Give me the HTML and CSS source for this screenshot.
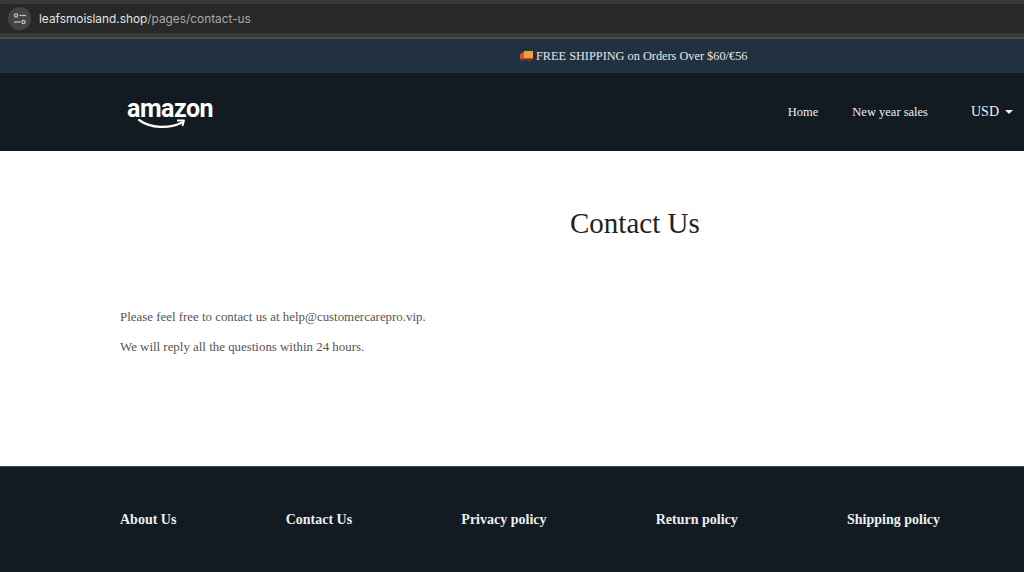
FILE: index.html
```html
<!DOCTYPE html>
<html lang="en">
<head>
<meta charset="utf-8">
<title>Contact Us</title>
<link rel="stylesheet" href="styles.css">
</head>
<body>
<div class="browser">
  <div class="address">
    <span class="site-icon">
      <svg width="14" height="12" viewBox="0 0 14 12" fill="none" stroke="#c4c4c4" stroke-width="1.2">
        <circle cx="3" cy="2.5" r="1.6"/><path d="M6.5 2.5H13"/>
        <circle cx="10.5" cy="9" r="1.6"/><path d="M1 9H7.5"/>
      </svg>
    </span>
    <span class="url"><span class="host">leafsmoisland.shop</span>/pages/contact-us</span>
  </div>
</div>
<div class="announce">
  <svg class="truck" width="13" height="12" viewBox="0 0 13 12"><rect x="4" y="1" width="9" height="8" fill="#e9a33c"/><path d="M0 5l1.500-2.500H4V9H0z" fill="#d9502e"/><rect x="0" y="8" width="13" height="1.500" fill="#c8452c"/><circle cx="2.500" cy="10" r="1.500" fill="#6b3a30"/><circle cx="9.500" cy="10" r="1.500" fill="#6b3a30"/></svg>
  <span class="announce-text">FREE SHIPPING on Orders Over $60/€56</span>
</div>
<header class="header">
  <a class="logo">
    <span class="logo-word">amazon</span>
    <svg class="smile" width="48" height="11" viewBox="0 0 48 11" fill="none">
      <path d="M1 1C13 9.500 31 10 44 3.500" stroke="#fff" stroke-width="2.200" stroke-linecap="round"/>
      <path d="M39 1.500L46 1.500L44.500 7" stroke="#fff" stroke-width="1.800" stroke-linejoin="round"/>
    </svg>
  </a>
  <nav class="nav">
    <a class="nav-link">Home</a>
    <a class="nav-link">New year sales</a>
    <span class="currency">USD<span class="caret"></span></span>
  </nav>
</header>
<main class="main">
  <h1 class="title">Contact Us</h1>
  <div class="copy">
    <p>Please feel free to contact us at help@customercarepro.vip.</p>
    <p>We will reply all the questions within 24 hours.</p>
  </div>
</main>
<footer class="footer">
  <a class="foot-link">About Us</a>
  <a class="foot-link">Contact Us</a>
  <a class="foot-link">Privacy policy</a>
  <a class="foot-link">Return policy</a>
  <a class="foot-link">Shipping policy</a>
</footer>
</body>
</html>
```

FILE: styles.css
```css
* { box-sizing: border-box; }
html, body { margin: 0; height: 572px; overflow: hidden; }
body { font-family: "Liberation Serif", serif; background: #fff; display: flex; flex-direction: column; }
.browser { height: 39px; background: #3a3a3a; padding-top: 4px; border-bottom: 2px solid #4c4e4e; flex: none; }
.address { height: 29px; background: #282828; display: flex; align-items: center; padding-left: 8px; gap: 8px; }
.site-icon { width: 23px; height: 23px; border-radius: 50%; background: #444; display: flex; align-items: center; justify-content: center; }
.url { font-family: Inter, "Liberation Sans", sans-serif; font-size: 11.850px; color: #a8a8a8; }
.host { color: #e4e4e4; }
.announce { height: 34px; background: #223140; flex: none; display: flex; align-items: center; gap: 3px; padding-left: 520px; }
.announce-text { font-size: 12.300px; color: #e6e8ea; white-space: nowrap; }
.truck { flex: none; }
.header { height: 78px; background: #121a22; flex: none; display: flex; align-items: center; justify-content: space-between; padding: 0 11px 0 127px; }
.logo { display: flex; flex-direction: column; width: 88px; margin-top: 2px; }
.logo-word { font-family: Roboto, sans-serif; font-weight: 700; font-size: 25px; line-height: 24px; color: #fff; letter-spacing: -0.500px; }
.smile { margin: -2px 0 0 11px; }
.nav { display: flex; align-items: center; color: #f0f1f2; font-size: 12.500px; }
.nav-link { margin-right: 34px; }
.nav-link + .nav-link { margin-right: 43px; }
.currency { font-size: 14px; display: flex; align-items: center; }
.caret { width: 0; height: 0; margin-left: 6px; border: 4px solid transparent; border-top: 4px solid #f0f1f2; border-bottom: 0; }
.main { height: 315px; flex: none; padding: 54px 120px 0; background: #fff; }
.title { margin: 0 0 0 450px; font-size: 29px; line-height: 36px; font-weight: 400; color: #222; white-space: nowrap; }
.copy { margin-top: 67px; font-size: 12.900px; line-height: 18px; color: #555; }
.copy p { margin: 0 0 12px; }
.footer { flex: 1; background: #121a22; border-top: 1px solid #3c444c; display: flex; justify-content: space-between; padding: 44px 84px 0 120px; }
.foot-link { font-size: 14px; font-weight: 700; color: #eceeef; line-height: 18px; }
```
